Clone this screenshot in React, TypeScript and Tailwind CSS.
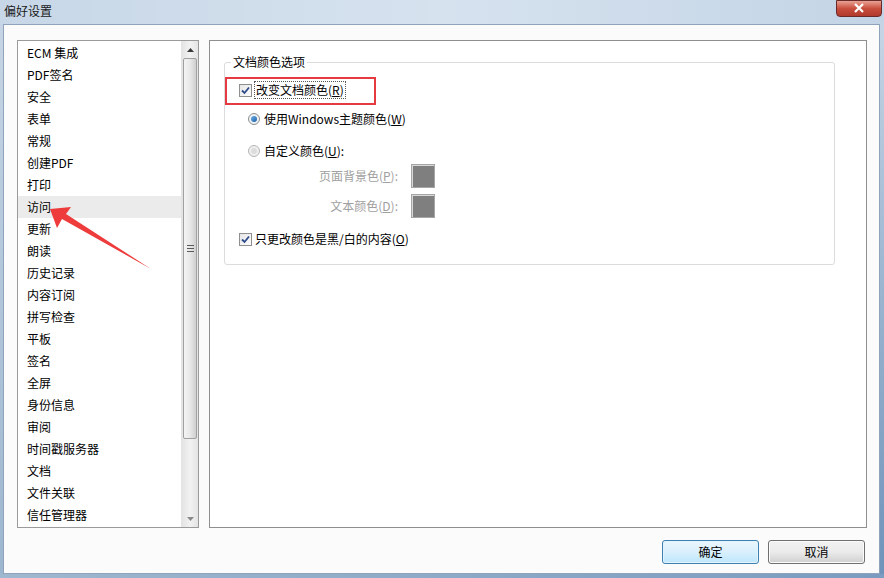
import React from "react";

const font = { fontFamily: '"Noto Sans CJK SC", "Noto Sans", sans-serif' };

const items = [
  "ECM 集成",
  "PDF签名",
  "安全",
  "表单",
  "常规",
  "创建PDF",
  "打印",
  "访问",
  "更新",
  "朗读",
  "历史记录",
  "内容订阅",
  "拼写检查",
  "平板",
  "签名",
  "全屏",
  "身份信息",
  "审阅",
  "时间戳服务器",
  "文档",
  "文件关联",
  "信任管理器",
];

function CheckBox() {
  return (
    <span className="flex h-[13px] w-[13px] items-center justify-center border border-[#8e8f8f] bg-gradient-to-br from-[#e6e6e6] to-[#fdfdfd]">
      <svg width="9" height="9" viewBox="0 0 9 9">
        <path d="M1 4.5 L3.5 7 L8 1.5" fill="none" stroke="#2d4a8a" strokeWidth="1.8" />
      </svg>
    </span>
  );
}

function Radio({ on }: { on: boolean }) {
  return (
    <span
      className={
        "flex h-[12px] w-[12px] items-center justify-center rounded-full border " +
        (on ? "border-[#8e8f8f] bg-[#eef2f6]" : "border-[#b5b5b5] bg-[#f0f0f0]")
      }
    >
      <span
        className={
          "h-[6px] w-[6px] rounded-full " +
          (on ? "bg-gradient-to-br from-[#6db0e6] to-[#1d5fa8]" : "bg-[#dcdcdc]")
        }
      />
    </span>
  );
}

function Swatch() {
  return <span className="h-[24px] w-[24px] border border-[#a5a5a5] bg-[#7f7f7f] shadow-[inset_1px_1px_0_#d8d8d8]" />;
}

export default function App() {
  return (
    <div className="relative flex h-[578px] w-[884px] flex-col overflow-hidden bg-[#b9cde1] text-[12px] text-black" style={font}>
      {/* title bar */}
      <div className="flex h-[24px] items-center justify-between bg-gradient-to-r from-[#c7d7e7] via-[#d6e2ee] to-[#c3d4e6] pl-[4px]">
        <span className="-mt-[3px] text-[12px] text-[#1a1a1a]">偏好设置</span>
        <div className="mr-[2px] -mt-[8px] flex h-[17px] w-[46px] items-center justify-center rounded-b-[4px] border border-[#6b2a2a] bg-gradient-to-b from-[#e8a193] via-[#c84e3e] to-[#b03a2c]">
          <svg width="12" height="10" viewBox="0 0 12 10">
            <path d="M2 1 L10 9 M10 1 L2 9" stroke="#ffffff" strokeWidth="2.2" />
          </svg>
        </div>
      </div>

      <div className="flex flex-1">
        <div className="w-[3px] bg-gradient-to-b from-[#c5d5e5] to-[#9db6cf]" />
        {/* client */}
        <div className="flex flex-1 flex-col border border-[#8fa4ba] bg-[#fbfbfb]">
          <div className="flex pl-[13px] pt-[15px] pr-[12px]">
            {/* list box */}
            <div className="flex h-[488px] w-[182px] border border-[#9a9a9a] bg-white">
              <div className="flex-1 pt-[1px]">
                {items.map((t) => (
                  <div
                    key={t}
                    className={"flex h-[22px] items-center pl-[9px] " + (t === "访问" ? "bg-[#ebebeb]" : "")}
                  >
                    {t}
                  </div>
                ))}
              </div>
              {/* scrollbar */}
              <div className="flex w-[17px] flex-col border-l border-[#e3e3e3] bg-gradient-to-r from-[#e4e4e4] via-[#f2f2f2] to-[#e4e4e4]">
                <div className="flex h-[17px] items-center justify-center">
                  <svg width="7" height="4" viewBox="0 0 7 4">
                    <path d="M0 4 L3.5 0 L7 4 Z" fill="#3a3a3a" />
                  </svg>
                </div>
                <div className="mx-[1px] flex h-[381px] items-center justify-center rounded-[2px] border border-[#a0a0a0] bg-gradient-to-r from-[#f4f4f4] via-[#e8e8e8] to-[#cfcfcf]">
                  <svg width="7" height="7" viewBox="0 0 7 7">
                    <path d="M0 0.5 H7 M0 3.5 H7 M0 6.5 H7" stroke="#5a5a5a" strokeWidth="1" />
                  </svg>
                </div>
                <div className="flex-1" />
                <div className="flex h-[17px] items-center justify-center">
                  <svg width="7" height="4" viewBox="0 0 7 4">
                    <path d="M0 0 L3.5 4 L7 0 Z" fill="#8a8a8a" />
                  </svg>
                </div>
              </div>
            </div>

            {/* right panel */}
            <div className="ml-[10px] h-[488px] flex-1 border border-[#8f8f8f] bg-white pl-[14px] pr-[31px] pt-[21px]">
              <div className="relative flex h-[203px] flex-col rounded-[3px] border border-[#dcdcdc] pl-[14px] pt-[16px]">
                <span className="absolute -top-[10px] left-[6px] bg-white px-[2px] leading-[18px]">文档颜色选项</span>

                <div className="flex h-[22px] items-center">
                  <CheckBox />
                  <span className="ml-[2px] border border-dotted border-[#555] px-[1px] leading-[16px]">
                    改变文档颜色(<span className="underline">R</span>)
                  </span>
                </div>

                <div className="mt-[7px] flex h-[22px] items-center pl-[9px]">
                  <Radio on />
                  <span className="ml-[4px]">
                    使用Windows主题颜色(<span className="underline">W</span>)
                  </span>
                </div>

                <div className="mt-[10px] flex h-[22px] items-center pl-[9px]">
                  <Radio on={false} />
                  <span className="ml-[4px]">
                    自定义颜色(<span className="underline">U</span>):
                  </span>
                </div>

                <div className="mt-[2px] flex h-[24px] items-center">
                  <span className="w-[159px] text-right text-[#a0a0a0]">
                    页面背景色(<span className="underline">P</span>):
                  </span>
                  <span className="ml-[13px] flex">
                    <Swatch />
                  </span>
                </div>

                <div className="mt-[6px] flex h-[24px] items-center">
                  <span className="w-[159px] text-right text-[#a0a0a0]">
                    文本颜色(<span className="underline">D</span>):
                  </span>
                  <span className="ml-[13px] flex">
                    <Swatch />
                  </span>
                </div>

                <div className="mt-[10px] flex h-[22px] items-center">
                  <CheckBox />
                  <span className="ml-[3px]">
                    只更改颜色是黑/白的内容(<span className="underline">O</span>)
                  </span>
                </div>
              </div>
            </div>
          </div>

          {/* buttons */}
          <div className="flex justify-end gap-[9px] pr-[14px] pt-[12px]">
            <button className="h-[24px] w-[97px] rounded-[3px] border border-[#3c7fb1] bg-gradient-to-b from-[#eaf6fd] via-[#d9f0fc] to-[#bee6fd] shadow-[inset_0_0_0_1px_#e3f4fc]">
              确定
            </button>
            <button className="h-[24px] w-[97px] rounded-[3px] border border-[#707070] bg-gradient-to-b from-[#f2f2f2] via-[#ebebeb] to-[#cfcfcf] shadow-[inset_0_0_0_1px_#fbfbfb]">
              取消
            </button>
          </div>
        </div>
        <div className="w-[4px] bg-gradient-to-b from-[#c5d5e5] to-[#6f93ba]" />
      </div>
      <div className="h-[4px] bg-gradient-to-r from-[#9fb7cf] to-[#7b9cc0]" />

      {/* annotations */}
      <div className="pointer-events-none absolute left-[225px] top-[77px] h-[28px] w-[151px] border-2 border-[#e53a40]" />
      <svg className="pointer-events-none absolute left-0 top-0" width="884" height="578" viewBox="0 0 884 578">
        <path d="M50 209 L71 207 L66 214 L151 269 L62 219 L57 228 Z" fill="#ee3b3b" />
      </svg>
    </div>
  );
}
